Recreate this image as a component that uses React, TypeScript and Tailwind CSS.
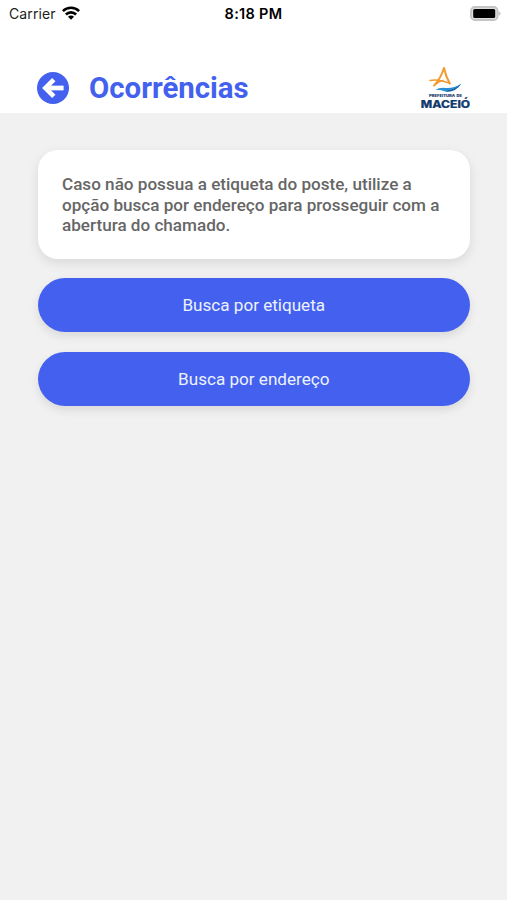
import React from 'react';

const actions = ['Busca por etiqueta', 'Busca por endereço'];

function WifiIcon() {
  return (
    <svg width="18" height="14" viewBox="0 0 18 14" fill="none" stroke="#000" strokeWidth="2.6">
      <path d="M0.9 5.1 A11.5 11.5 0 0 1 17.1 5.1" />
      <path d="M3.9 8.5 A7.2 7.2 0 0 1 14.1 8.5" />
      <path d="M9 13.8 L6 10.8 A4.2 4.2 0 0 1 12 10.8 Z" fill="#000" stroke="none" />
    </svg>
  );
}

function BatteryIcon() {
  return (
    <svg width="31" height="15" viewBox="0 0 31 15">
      <rect x="1" y="1" width="26.6" height="13" rx="3.8" fill="#ddd" stroke="#c4c4c4" strokeWidth="1.8" />
      <rect x="3.2" y="3" width="22" height="9" rx="1.6" fill="#000" />
      <path d="M28.6 5.2 Q30.6 6 30.6 7.5 Q30.6 9 28.6 9.8 Z" fill="#c4c4c4" />
    </svg>
  );
}

function BackIcon() {
  return (
    <svg width="32" height="32" viewBox="0 0 32 32" fill="none" stroke="#fff" strokeWidth="4.7">
      <circle cx="16" cy="16" r="16" fill="#4361ee" stroke="none" />
      <path d="M16.8 7.6 L8.4 16 L16.8 24.4" />
      <path d="M9 16 H26.6" />
    </svg>
  );
}

function Logo() {
  return (
    <svg width="50" height="44" viewBox="0 0 50 44" className="shrink-0">
      <g fill="none" stroke="#f29a2e" strokeLinecap="round" strokeLinejoin="round">
        <path d="M14.2 19.4 Q20.6 12.6 24 2 Q25.8 10.5 29.8 17.4" strokeWidth="2" />
        <path d="M10 14.4 Q18.5 12.6 29.8 17.4" strokeWidth="1.5" />
        <path d="M14.2 19.4 Q18.5 15.2 23 14.6" strokeWidth="1.5" />
      </g>
      <path d="M15 23.8 Q20 21.2 25.5 21.9 Q34 22.4 41.4 17.4 Q36 25.9 26 25.7 Q21 23.5 15 23.8 Z" fill="#2b8fd6" />
      <path d="M26 25.7 Q36 25.9 41.4 17.4 Q36 23.2 28 24.2 Z" fill="#17639f" />
      <text
        x="9"
        y="31.2"
        textLength="33"
        lengthAdjust="spacingAndGlyphs"
        fontSize="3.7"
        fontWeight="900"
        fill="#173a6a"
        wordSpacing="0.6"
        className="font-['Inter',sans-serif]"
      >
        PREFEITURA DE
      </text>
      <text
        x="0.8"
        y="41.8"
        textLength="49.4"
        lengthAdjust="spacingAndGlyphs"
        fontSize="10.6"
        fontWeight="800"
        fill="#123a6c"
        stroke="#123a6c"
        strokeWidth="0.2"
        className="font-['Inter',sans-serif]"
      >
        MACEIÓ
      </text>
    </svg>
  );
}

export default function App() {
  return (
    <div className="flex h-screen w-full flex-col overflow-hidden bg-[#f1f1f1] font-['Roboto',sans-serif]">
      <header className="h-[113px] shrink-0 bg-white">
        <div className="grid h-[26px] grid-cols-3 items-center px-[6px] font-['Inter',sans-serif] text-black">
          <div className="flex items-center gap-[6px] pl-[3px]">
            <span className="text-[14px] tracking-[0.1px] text-[#222]">Carrier</span>
            <WifiIcon />
          </div>
          <span className="pt-[2px] text-center text-[14.5px] font-semibold tracking-[0.3px]">8:18 PM</span>
          <div className="flex justify-end">
            <BatteryIcon />
          </div>
        </div>
        <div className="flex items-center pl-[37px] pr-[37px] pt-10">
          <BackIcon />
          <h1 className="ml-5 flex-1 text-[29.4px] font-bold leading-[34px] text-[#4361ee]">Ocorrências</h1>
          <Logo />
        </div>
      </header>

      <main className="pl-[37.5px] pr-[37px] pt-[37px]">
        <div className="h-[109px] rounded-[20px] bg-white pl-[24.5px] pt-[24.4px] shadow-[0_4px_12px_rgba(0,0,0,0.1)]">
          <p className="text-[17.1px] font-medium leading-[20.2px] text-[#666]">
            Caso não possua a etiqueta do poste, utilize a
            <br />
            opção busca por endereço para prosseguir com a
            <br />
            abertura do chamado.
          </p>
        </div>
        <div className="mt-[19px] flex flex-col gap-5">
          {actions.map((label) => (
            <button
              key={label}
              className="h-[54px] rounded-full bg-[#4361ee] pt-[2px] text-[17.1px] text-[#eef2ff] shadow-[0_4px_10px_rgba(0,0,0,0.1)]"
            >
              {label}
            </button>
          ))}
        </div>
      </main>
    </div>
  );
}
